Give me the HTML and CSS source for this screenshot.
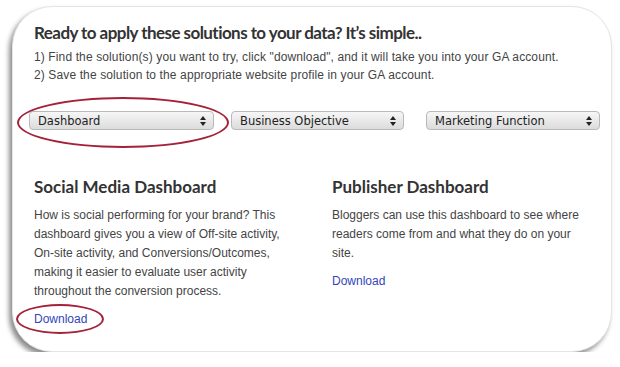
FILE: index.html
```html
<!DOCTYPE html>
<html lang="en">
<head>
    <meta charset="UTF-8">
    <title>Apply Solutions</title>
    <link rel="stylesheet" href="styles.css">
</head>
<body>

<div class="card">
    <h1 class="title">Ready to apply these solutions to your data? It&rsquo;s simple..</h1>
    <p class="step">1) Find the solution(s) you want to try, click "download", and it will take you into your GA account.</p>
    <p class="step">2) Save the solution to the appropriate website profile in your GA account.</p>

    <div class="filters">
        <div class="select wide circled">
            <span>Dashboard</span>
            <svg class="arrows" width="6" height="10" viewBox="0 0 6 10"><path d="M3 0 L6 4 L0 4 Z M3 10 L6 6 L0 6 Z" fill="#222"/></svg>
        </div>
        <div class="select">
            <span>Business Objective</span>
            <svg class="arrows" width="6" height="10" viewBox="0 0 6 10"><path d="M3 0 L6 4 L0 4 Z M3 10 L6 6 L0 6 Z" fill="#222"/></svg>
        </div>
        <div class="select">
            <span>Marketing Function</span>
            <svg class="arrows" width="6" height="10" viewBox="0 0 6 10"><path d="M3 0 L6 4 L0 4 Z M3 10 L6 6 L0 6 Z" fill="#222"/></svg>
        </div>
    </div>

    <div class="solutions">
        <div class="solution">
            <h2>Social Media Dashboard</h2>
            <p>How is social performing for your brand? This dashboard gives you a view of Off-site activity, On-site activity, and Conversions/Outcomes, making it easier to evaluate user activity throughout the conversion process.</p>
            <a href="#" class="download circled-link">Download</a>
        </div>
        <div class="solution">
            <h2>Publisher Dashboard</h2>
            <p>Bloggers can use this dashboard to see where readers come from and what they do on your site.</p>
            <a href="#" class="download">Download</a>
        </div>
    </div>
</div>

</body>
</html>
```

FILE: styles.css
```css
body {
    margin: 0;
    background: #fff;
    font-family: "Liberation Sans", Arial, sans-serif;
}
.card {
    margin: 6px 0 0 12px;
    width: 600px;
    height: 346px;
    box-sizing: border-box;
    padding: 15px 8px 0 21px;
    background: #fff;
    border: 1px solid #e4e4e4;
    border-radius: 40px;
    box-shadow: -3px 4px 5px rgba(0, 0, 0, 0.45);
}
.title {
    margin: 0 0 5px;
    font-family: Lato, sans-serif;
    font-size: 17px;
    font-weight: 700;
    letter-spacing: -0.55px;
    color: #333;
}
.step {
    margin: 0;
    font-size: 12px;
    line-height: 18px;
    letter-spacing: 0.12px;
    color: #444;
}
.filters {
    display: flex;
    margin-top: 27px;
    margin-left: -5px;
}
.select {
    position: relative;
    flex: none;
    display: flex;
    align-items: center;
    justify-content: space-between;
    width: 173px;
    height: 19px;
    box-sizing: border-box;
    padding: 0 7px 0 8px;
    margin-right: 17px;
    border: 1px solid #b9b9b9;
    border-radius: 4px;
    background: linear-gradient(#f6f6f6, #dcdcdc);
    font-family: "DejaVu Sans", sans-serif;
    font-size: 11.5px;
    color: #222;
}
.select.wide {
    width: 185px;
}
.select:last-child {
    width: 174px;
    margin-left: 5px;
    margin-right: 0;
}
.circled::after {
    content: "";
    position: absolute;
    left: -13px;
    top: -15px;
    width: 208px;
    height: 47px;
    border: 2px solid #a3223a;
    border-radius: 50%;
}
.solutions {
    display: flex;
    margin-top: 46px;
}
.solution {
    flex: none;
    width: 298px;
}
.solution h2 {
    margin: 0 0 9px;
    font-family: Lato, sans-serif;
    font-size: 17px;
    font-weight: 700;
    color: #333;
}
.solution p {
    margin: 0 0 8px;
    width: 262px;
    font-size: 12px;
    line-height: 19px;
    color: #444;
}
.download {
    position: relative;
    font-size: 12px;
    color: #3344bb;
    text-decoration: none;
}
.circled-link::after {
    content: "";
    position: absolute;
    left: -18px;
    top: -8px;
    width: 84px;
    height: 26px;
    border: 2px solid #a3223a;
    border-radius: 50%;
}
```
